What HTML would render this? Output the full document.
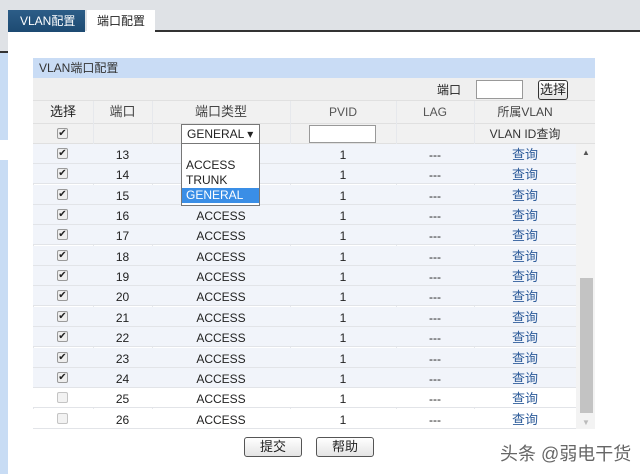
<!DOCTYPE html>
<html><head><meta charset="utf-8"><style>
*{margin:0;padding:0;box-sizing:border-box}
body{width:640px;height:474px;position:relative;background:#fff;overflow:hidden;font-family:"Liberation Sans","Noto Sans CJK SC",sans-serif;font-size:12px;color:#222}
.a{position:absolute}
.c{position:absolute;text-align:center;line-height:20px}
.row{position:absolute;left:33px;width:543px;height:20px;border-bottom:1px solid #e2e4e8}
.cb{position:absolute;left:57px;top:4px;width:11px;height:11px;border:1px solid #9a9a9a;border-radius:2px;background:#eee;font-size:10px;line-height:9px;text-align:center;color:#222}
.cb.u{border-color:#c4c4c4;background:#f2f2f2}
a{color:#2e5c9a;text-decoration:none}
.btn{position:absolute;height:20px;border:1px solid #555;border-radius:3px;background:linear-gradient(#fff,#e4e4e4);text-align:center;line-height:18px}
</style></head><body>
<div class="a" style="left:0;top:0;width:640px;height:31px;background:#dfe2e6"></div>
<div class="a" style="left:8px;top:10px;width:77px;height:22px;background:linear-gradient(#2c5d88,#1d4a72);color:#fff;line-height:22px;padding-left:12px">VLAN配置</div>
<div class="a" style="left:87px;top:10px;width:68px;height:22px;background:#fff;line-height:22px;padding-left:10px">端口配置</div>
<div class="a" style="left:155px;top:30px;width:485px;height:2px;background:#333"></div>
<div class="a" style="left:0;top:31px;width:8px;height:20px;background:#dfe2e6"></div>
<div class="a" style="left:0;top:51px;width:8px;height:2px;background:#333"></div>
<div class="a" style="left:0;top:53px;width:8px;height:87px;background:#c8dcf4"></div>
<div class="a" style="left:0;top:160px;width:8px;height:314px;background:#c8dcf4"></div>

<div class="a" style="left:33px;top:58px;width:562px;height:371px;border:1px solid #e4e6ea"></div>
<div class="a" style="left:33px;top:58px;width:562px;height:20px;background:#c9dcf5;line-height:20px;padding-left:6px;color:#333">VLAN端口配置</div>
<div class="a" style="left:33px;top:78px;width:562px;height:23px;background:#efefef;border-bottom:1px solid #e0e0e0"></div>
<div class="a" style="left:437px;top:82px;line-height:16px">端口</div>
<div class="a" style="left:476px;top:80px;width:47px;height:19px;border:1px solid #999;background:#fff"></div>
<div class="btn" style="left:538px;top:80px;width:30px;height:20px;border:1px solid #333;line-height:18px;font-size:13px">选择</div>

<div class="a" style="left:33px;top:101px;width:562px;height:43px;background:#f1f1f1"></div>
<div class="a" style="left:33px;top:123px;width:562px;height:1px;background:#e0e0e0"></div>
<div class="a" style="left:33px;top:143px;width:562px;height:1px;background:#e0e0e0"></div>
<div class="c" style="left:33px;top:102px;width:60px;font-size:13px">选择</div>
<div class="c" style="left:93px;top:102px;width:59px;font-size:13px;color:#444">端口</div>
<div class="c" style="left:152px;top:102px;width:138px;font-size:13px;color:#444">端口类型</div>
<div class="c" style="left:290px;top:102px;width:106px;color:#555">PVID</div>
<div class="c" style="left:396px;top:102px;width:78px;color:#555">LAG</div>
<div class="c" style="left:474px;top:102px;width:102px;color:#444">所属VLAN</div>
<div class="cb a" style="left:57px;top:128px">✔</div>
<div class="a" style="left:181px;top:124px;width:79px;height:20px;border:1px solid #777;background:#fff;line-height:18px;padding-left:5px">GENERAL ▾</div>
<div class="a" style="left:309px;top:125px;width:67px;height:18px;border:1px solid #999;background:#fff"></div>
<div class="c" style="left:474px;top:124px;width:102px;color:#333">VLAN ID查询</div>
<div class="a" style="left:93px;top:101px;width:1px;height:328px;background:#e6e8ec"></div>
<div class="a" style="left:152px;top:101px;width:1px;height:328px;background:#e6e8ec"></div>
<div class="a" style="left:290px;top:101px;width:1px;height:328px;background:#e6e8ec"></div>
<div class="a" style="left:396px;top:101px;width:1px;height:328px;background:#e6e8ec"></div>
<div class="a" style="left:474px;top:101px;width:1px;height:328px;background:#e6e8ec"></div>

<div class="a" style="left:576px;top:144px;width:19px;height:285px;background:#f3f3f3"></div>
<div class="a" style="left:580px;top:278px;width:13px;height:135px;background:#c3c3c3"></div>
<div class="a" style="left:582px;top:148px;font-size:8px;color:#555">▲</div>
<div class="a" style="left:582px;top:418px;font-size:8px;color:#bbb">▼</div>

<div id="rows"></div>
<script>
var tops=[144,164,185,205,225,246,266,286,307,327,348,368,388,409],h='';
for(var i=0;i<14;i++){var p=13+i,ch=p<25;
h+='<div class="row" style="top:'+tops[i]+'px;background:'+(ch?'#f1f4fa':'#fff')+'">'+
'<div class="cb'+(ch?'':' u')+'" style="left:24px;top:4px">'+(ch?'✔':'')+'</div>'+
'<div class="c" style="left:60px;top:1px;width:59px">'+p+'</div>'+
'<div class="c" style="left:119px;top:1px;width:138px">ACCESS</div>'+
'<div class="c" style="left:257px;top:1px;width:106px">1</div>'+
'<div class="c" style="left:363px;top:1px;width:78px">---</div>'+
'<div class="c" style="left:441px;top:1px;width:102px;font-size:13px"><a>查询</a></div></div>';}
document.getElementById('rows').innerHTML=h;
</script>
<div class="a" style="left:181px;top:144px;width:79px;height:62px;border:1px solid #777;border-top:none;background:#fff;line-height:15px;padding-top:14px">
<div style="padding-left:4px">ACCESS</div><div style="padding-left:4px">TRUNK</div>
<div style="padding-left:4px;background:#3a8ee6;color:#fff">GENERAL</div></div>

<div class="btn" style="left:244px;top:437px;width:58px;font-size:13px">提交</div>
<div class="btn" style="left:316px;top:437px;width:58px;font-size:13px">帮助</div>
<div class="a" style="left:500px;top:440px;font-size:18px;color:#666">头条 @弱电干货</div>
</body></html>
